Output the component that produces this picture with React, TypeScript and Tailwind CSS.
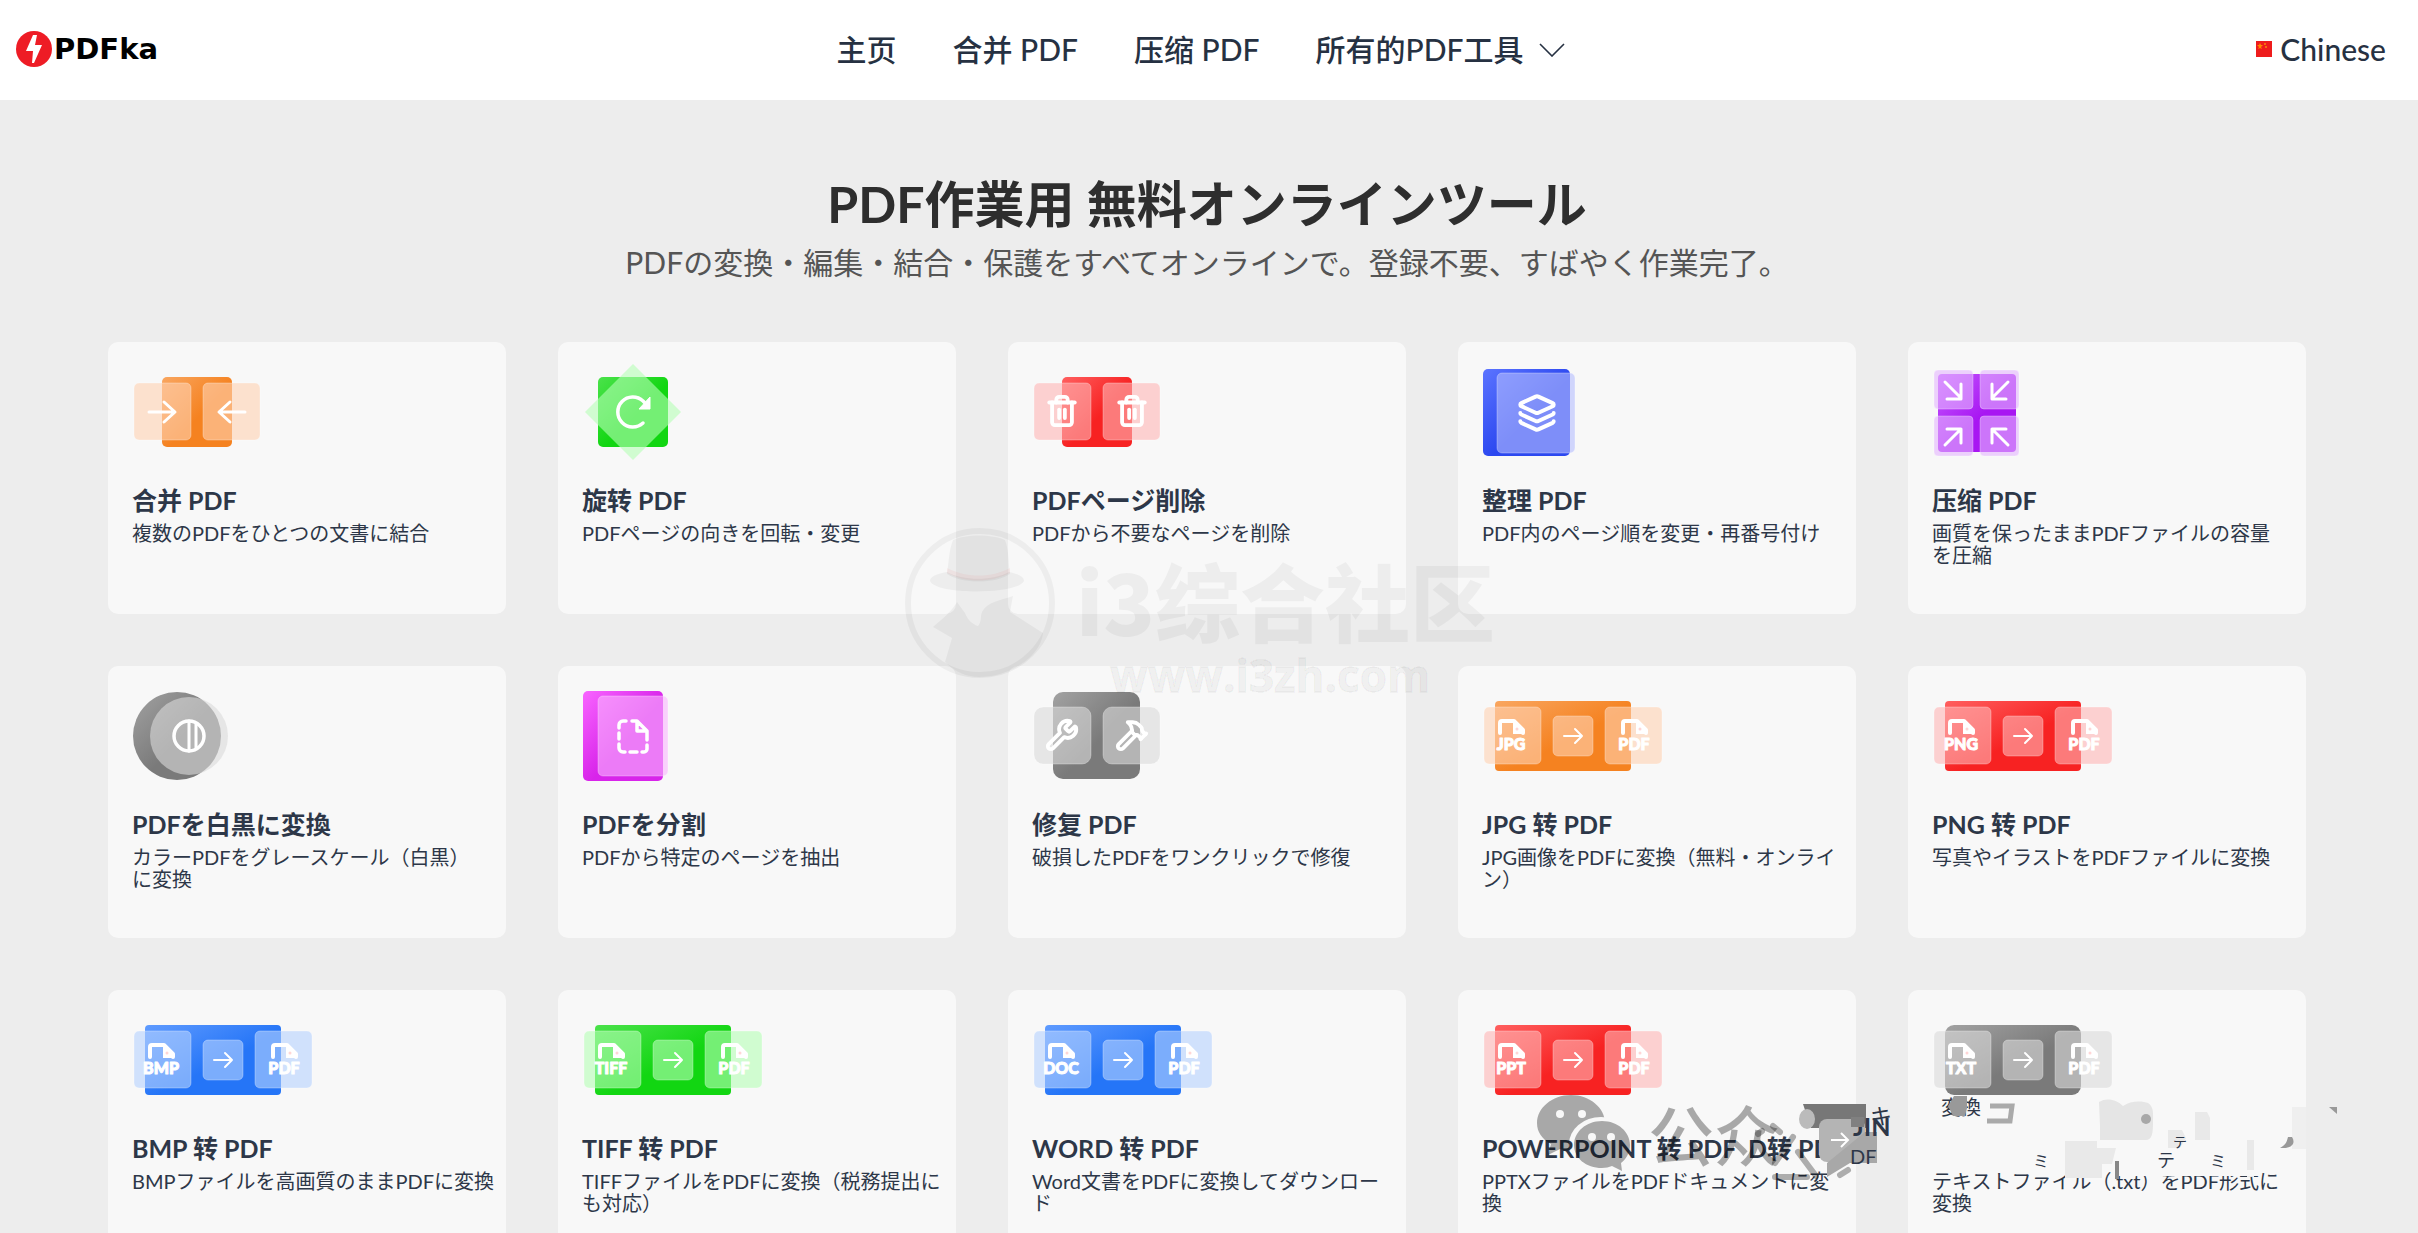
import React from 'react';
import { Hammer, Layers, Trash2, Wrench } from 'lucide-react';

type Tone = { from: string; to: string; pane: string };

const tones: Record<string, Tone> = {
  orange: { from: '#f9a660', to: '#f58220', pane: '#ffd2b2' },
  red: { from: '#ff5f5f', to: '#f72222', pane: '#ffb5b5' },
  blue: { from: '#5f9bff', to: '#2575f7', pane: '#b5d2ff' },
  green: { from: '#4be24b', to: '#12d612', pane: '#b5ffb5' },
  gray: { from: '#a2a2a2', to: '#7a7a7a', pane: '#dadada' },
  indigo: { from: '#5c74ff', to: '#2c48f0', pane: '#b5beff' },
  purple: { from: '#c65cff', to: '#a816f2', pane: '#e5b5ff' },
  magenta: { from: '#f865ff', to: '#d824ea', pane: '#fab5ff' },
};

type Tool = {
  id: string;
  tone: keyof typeof tones;
  title: string;
  text: string;
  label?: string;
};

const tools: Tool[] = [
  { id: 'merge', tone: 'orange', title: '合并 PDF', text: '複数のPDFをひとつの文書に結合' },
  { id: 'rotate', tone: 'green', title: '旋转 PDF', text: 'PDFページの向きを回転・変更' },
  { id: 'delete', tone: 'red', title: 'PDFページ削除', text: 'PDFから不要なページを削除' },
  { id: 'organize', tone: 'indigo', title: '整理 PDF', text: 'PDF内のページ順を変更・再番号付け' },
  { id: 'compress', tone: 'purple', title: '压缩 PDF', text: '画質を保ったままPDFファイルの容量\nを圧縮' },
  { id: 'grayscale', tone: 'gray', title: 'PDFを白黒に変換', text: 'カラーPDFをグレースケール（白黒）\nに変換' },
  { id: 'split', tone: 'magenta', title: 'PDFを分割', text: 'PDFから特定のページを抽出' },
  { id: 'repair', tone: 'gray', title: '修复 PDF', text: '破損したPDFをワンクリックで修復' },
  { id: 'jpg', tone: 'orange', title: 'JPG 转 PDF', text: 'JPG画像をPDFに変換（無料・オンライ\nン）', label: 'JPG' },
  { id: 'png', tone: 'red', title: 'PNG 转 PDF', text: '写真やイラストをPDFファイルに変換', label: 'PNG' },
  { id: 'bmp', tone: 'blue', title: 'BMP 转 PDF', text: 'BMPファイルを高画質のままPDFに変換', label: 'BMP' },
  { id: 'tiff', tone: 'green', title: 'TIFF 转 PDF', text: 'TIFFファイルをPDFに変換（税務提出に\nも対応）', label: 'TIFF' },
  { id: 'word', tone: 'blue', title: 'WORD 转 PDF', text: 'Word文書をPDFに変換してダウンロー\nド', label: 'DOC' },
  { id: 'ppt', tone: 'red', title: 'POWERPOINT 转 PDF  D转 PD', text: 'PPTXファイルをPDFドキュメントに変\n換', label: 'PPT' },
  { id: 'txt', tone: 'gray', title: '', text: 'テキストファイル（.txt）をPDF形式に\n変換', label: 'TXT' },
];

function Pane({ x, y, w, h, fill, r = 5 }: { x: number; y: number; w: number; h: number; fill: string; r?: number }) {
  return (
    <rect x={x} y={y} width={w} height={h} rx={r} fill={fill} fillOpacity={0.6} stroke="#fff" strokeOpacity={0.3} />
  );
}

function FileBadge({ x, label }: { x: number; label: string }) {
  return (
    <g>
      <path
        d={`M${x + 3} 47V37a2 2 0 0 1 2-2h12l9 9v3`}
        fill="none"
        stroke="#fff"
        strokeWidth="4"
        strokeLinejoin="round"
        strokeLinecap="round"
      />
      <path d={`M${x + 16} 34l11 14H${x + 16}z`} fill="#fff" />
      <circle cx={x + 20} cy={43} r={1.5} fill="#f99" fillOpacity={0.4} />
      <text
        x={x + 14}
        y={64}
        textAnchor="middle"
        fill="#fff"
        stroke="#fff"
        strokeWidth="1"
        strokeLinejoin="round"
        className="font-['Lato'] text-[16px] font-black"
      >
        {label}
      </text>
    </g>
  );
}

function ToolIcon({ tool }: { tool: Tool }) {
  const tone = tones[tool.tone];
  const grad = `url(#grad-${tool.id})`;
  const line = {
    fill: 'none',
    stroke: '#fff',
    strokeWidth: 3,
    strokeLinecap: 'round' as const,
    strokeLinejoin: 'round' as const,
  };
  const pane = tone.pane;

  return (
    <svg width="200" height="100" viewBox="0 0 200 100" aria-hidden="true">
      <defs>
        <linearGradient id={`grad-${tool.id}`} x1="0" y1="0" x2="1" y2="1">
          <stop offset="0" stopColor={tone.from} />
          <stop offset="0.55" stopColor={tone.to} />
        </linearGradient>
      </defs>

      {tool.id === 'merge' && (
        <>
          <rect x="30" y="15" width="70" height="70" rx="5" fill={grad} />
          <Pane x={2} y={21} w={57} h={57} fill={pane} />
          <Pane x={71} y={21} w={57} h={57} fill={pane} />
          <path d="M17 50h25M32 40l11 10-11 10" {...line} />
          <path d="M113 50H88M98 40L87 50l11 10" {...line} />
        </>
      )}

      {tool.id === 'rotate' && (
        <>
          <rect x="16" y="15" width="70" height="70" rx="5" fill={grad} />
          <path d="M51 2l48 48-48 48L3 50z" fill={pane} fillOpacity="0.6" />
          <path d="M61 61a15 15 0 1 1 0-22l5 5" {...line} strokeWidth={3.5} />
          <path d="M68 35v12H57z" fill="#fff" stroke="#fff" strokeLinejoin="round" />
        </>
      )}

      {tool.id === 'delete' && (
        <>
          <rect x="30" y="15" width="70" height="70" rx="5" fill={grad} />
          <Pane x={2} y={21} w={57} h={57} fill={pane} />
          <Pane x={71} y={21} w={57} h={57} fill={pane} />
          <Trash2 x={13} y={32} width={34} height={34} color="#fff" strokeWidth={2.7} />
          <Trash2 x={83} y={32} width={34} height={34} color="#fff" strokeWidth={2.7} />
        </>
      )}

      {tool.id === 'organize' && (
        <>
          <rect x="1" y="7" width="87" height="87" rx="5" fill={grad} />
          <Pane x={15} y={11} w={78} h={80} fill={pane} />
          <Layers x={35} y={31} width={40} height={40} color="#fff" strokeWidth={2.4} />
        </>
      )}

      {tool.id === 'compress' && (
        <>
          <rect x="6" y="12" width="78" height="78" rx="4" fill={grad} />
          <Pane x={2} y={8} w={39} h={39} fill={pane} r={4} />
          <Pane x={48} y={8} w={39} h={39} fill={pane} r={4} />
          <Pane x={2} y={54} w={39} h={40} fill={pane} r={4} />
          <Pane x={48} y={54} w={39} h={40} fill={pane} r={4} />
          <path d="M13 20l16 16M29 22v15H15" {...line} />
          <path d="M76 20L60 36M60 22v15h14" {...line} />
          <path d="M13 83l16-16M29 81V67H15" {...line} />
          <path d="M76 83L60 67M60 81V67h14" {...line} />
        </>
      )}

      {tool.id === 'grayscale' && (
        <>
          <circle cx="45" cy="50" r="44" fill={grad} />
          <circle cx="57" cy="50" r="39" fill={pane} fillOpacity="0.6" />
          <circle cx="57" cy="50" r="15" {...line} strokeWidth={3.5} />
          <path d="M57 35v30M64 38v24" {...line} />
        </>
      )}

      {tool.id === 'split' && (
        <>
          <rect x="1" y="5" width="80" height="90" rx="5" fill={grad} />
          <Pane x={16} y={10} w={70} h={80} fill={pane} />
          <path
            d="M44 35h-3a4 4 0 0 0-4 4v3M37 47v6M37 58v4a4 4 0 0 0 4 4h2M48 66h7M60 66h2a3 3 0 0 0 3-3v-4M65 54v-9L55 35h-5M55 36v9h9"
            {...line}
            strokeWidth={3.5}
          />
        </>
      )}

      {tool.id === 'repair' && (
        <>
          <rect x="21" y="6" width="87" height="87" rx="10" fill={grad} />
          <Pane x={2} y={21} w={57} h={57} fill={pane} r={9} />
          <Pane x={71} y={21} w={57} h={57} fill={pane} r={9} />
          <Wrench x={13} y={32} width={34} height={34} color="#fff" strokeWidth={2.7} />
          <Hammer x={83} y={32} width={34} height={34} color="#fff" strokeWidth={2.7} />
        </>
      )}

      {tool.label && (
        <>
          <rect x="13" y="15" width="136" height="70" rx={tool.tone === 'gray' ? 9 : 4} fill={grad} />
          <Pane x={2} y={21} w={57} h={57} fill={pane} />
          <Pane x={71} y={30} w={40} h={40} fill={pane} />
          <Pane x={123} y={21} w={57} h={57} fill={pane} />
          <path d="M82 50h18M93 43l7 7-7 7" {...line} strokeWidth={2} />
          <FileBadge x={15} label={tool.label} />
          <FileBadge x={138} label="PDF" />
        </>
      )}
    </svg>
  );
}

function Header() {
  return (
    <header className="flex h-25 items-center bg-white pb-0.5 pl-4 pr-8 text-[30px] leading-10 font-medium text-[#263142]">
      <div className="flex flex-1">
        <a href="#" className="flex items-center gap-0.5 text-black">
          <svg width="36" height="36" viewBox="0 0 36 36" aria-hidden="true">
            <circle cx="18" cy="18" r="18" fill="#ee1c25" />
            <path d="M17 4h4l-2 10h7l-8 18h-2l1-12h-7z" fill="#fff" />
          </svg>
          <span className="font-['DejaVu_Sans'] text-[29px] font-bold">PDFka</span>
        </a>
      </div>
      <nav className="flex items-center gap-14">
        <a href="#">主页</a>
        <a href="#">合并 PDF</a>
        <a href="#">压缩 PDF</a>
        <button type="button" className="flex items-center gap-4">
          所有的PDF工具
          <svg width="26" height="16" viewBox="0 0 26 16" fill="none" stroke="currentColor" strokeWidth="1.6" aria-hidden="true">
            <path d="M1 3l12 12L25 3" />
          </svg>
        </button>
      </nav>
      <div className="flex flex-1 justify-end">
        <button type="button" className="flex items-center gap-2">
          <svg width="16" height="16" viewBox="0 0 16 16" aria-hidden="true">
            <rect width="16" height="16" fill="#ee1c1c" />
            <path d="M4 2l1 2h2L5 6l1 2-2-1-2 1 1-2-2-2h2z" fill="#f80" />
            <circle cx="9" cy="3" r="0.7" fill="#ff0" />
            <circle cx="10" cy="6" r="0.7" fill="#ff0" />
          </svg>
          Chinese
        </button>
      </div>
    </header>
  );
}

function ToolCard({ tool }: { tool: Tool }) {
  return (
    <a href={`#${tool.id}`} className="block min-h-68 rounded-[10px] bg-[#f8f8f8] pt-5 pb-4 pl-6 text-[#2d3748]">
      <ToolIcon tool={tool} />
      <h2 className="mt-[22px] min-h-8 text-[25px] leading-8 font-bold whitespace-pre">{tool.title}</h2>
      <p className="mt-1.5 text-xl leading-[22px] whitespace-pre font-[Lato,'Noto_Sans_CJK_JP',sans-serif]">{tool.text}</p>
    </a>
  );
}

function SiteMark() {
  return (
    <svg
      className="pointer-events-none absolute top-[526px] left-[904px]"
      width="600"
      height="180"
      viewBox="0 0 600 180"
      fill="#000"
      fillOpacity="0.045"
      aria-hidden="true"
    >
      <circle cx="76" cy="77" r="72" fill="none" stroke="#000" strokeOpacity="0.045" strokeWidth="6" />
      <path d="M43 48c2-14 2-24 6-34 12-6 40-6 52 0 4 10 3 20 5 34-14 10-49 10-63 0z" />
      <path d="M43 42c20 10 44 10 63 0v5c-20 10-44 10-63 0z" fill="#f00" />
      <path d="M43 46c-12 2-17 5-17 9 5 14 88 14 94 0 0-4-5-7-15-9-16 9-46 9-62 0z" />
      <path d="M53 76c-6 10-16 18-24 25l19 11-7 24c10 10 22 15 34 15 30 0 62-20 64-44l-33-21 3-16c-12 4-26 6-31 16-2 5 0 9-4 14-6-2-10-6-13-13z" />
      <text x="172" y="110" className="font-['Noto_Sans_CJK_SC'] text-[85px] font-black">
        i3综合社区
      </text>
      <text x="206" y="166" stroke="#000" strokeOpacity="0.03" strokeWidth="2" className="font-['Open_Sans'] text-[44px] font-bold">
        www.i3zh.com
      </text>
    </svg>
  );
}

function ChannelMark() {
  return (
    <svg
      className="pointer-events-none absolute top-[1090px] left-[1530px]"
      width="830"
      height="140"
      viewBox="0 0 830 140"
      aria-hidden="true"
    >
      <defs>
        <mask id="bubble-mask">
          <rect width="120" height="100" fill="#fff" />
          <circle cx="30" cy="24" r="4" fill="#000" />
          <circle cx="52" cy="24" r="4" fill="#000" />
          <ellipse cx="71" cy="54" rx="32" ry="27" fill="#000" />
        </mask>
        <mask id="bubble-mask-small">
          <rect width="120" height="100" fill="#fff" />
          <circle cx="62" cy="47" r="4" fill="#000" />
          <circle cx="81" cy="47" r="4" fill="#000" />
        </mask>
      </defs>
      <g fill="#000" fillOpacity="0.32">
        <path d="M41 5c19 0 34 13 34 28S60 61 41 61c-4 0-8-1-11-2l-12 6 3-11C12 49 7 42 7 33 7 18 22 5 41 5z" mask="url(#bubble-mask)" />
        <path d="M72 31c16 0 28 11 28 24 0 8-4 14-9 18l1 8-10-5c-3 1-6 2-10 2-16 0-28-10-28-23s12-24 28-24z" mask="url(#bubble-mask-small)" />
        <text x="118" y="71" className="font-['Noto_Sans_CJK_SC'] text-[66px] font-medium">
          公众
        </text>
      </g>
      {/* broken up pieces to the right of the channel name */}
      <path d="M273 14h63v24h-55z" fill="#777" />
      <ellipse cx="277" cy="29" rx="8" ry="10" fill="#bbb" />
      <g fill="none" stroke="#000" strokeOpacity="0.3" strokeWidth="6" strokeLinecap="round">
        <path d="M243 36l7 6M228 44l4-3M263 47l-18 26M268 62l18 24M245 87h32M310 85l8-5" />
      </g>
      <rect x="289" y="29" width="46" height="43" rx="8" fill="#b4b4b4" />
      <path d="M335 42h12v31h-27l-23 14v-14z" fill="#a8a8a8" />
      <path d="M301 50h16M311 43l7 7-7 7" fill="none" stroke="#fff" strokeWidth="2" />
      <g fill="#2d3748">
        <text x="340" y="34" className="font-['Noto_Sans_CJK_JP'] text-[22px]">キ</text>
        <text x="323" y="46" className="font-['Lato'] text-[25px] font-bold">JIN</text>
        <text x="320" y="74" className="font-['Lato'] text-[20px]">DF</text>
        <text x="411" y="25" className="font-['Noto_Sans_CJK_JP'] text-[20px]">変換</text>
      </g>
      <path d="M321 27h13v10h-13z" fill="#808080" />
      <path d="M424 6h13v12l-2 8h-12l-5-10z" fill="#999" />
      <path d="M460 16h22l-2 15h-23" fill="none" stroke="#aaa" strokeWidth="5" />

      <path d="M569 12c8-5 18-2 24 4 8-6 20-5 25-3 6 4 5 10 5 20s-1 17-7 17h-46V36z" fill="#e5e5e5" />
      <circle cx="616" cy="29" r="5" fill="#a8a8a8" />
      <path d="M638 40h14l4 8-6 10h-12zM665 22h12l3 6v22h-15z" fill="#e9e9e9" />
      <path d="M535 51h32v7h19l-4 16h-10v14h-37zM717 50h7v37h-7z" fill="#e9e9e9" />
      <path d="M762 17h14v42h-14z" fill="#efefef" />
      <path d="M799 17h8v7z" fill="#999" />
      <path d="M762 47c4 6 0 12-12 11 6-3 7-7 8-11z" fill="#999" />
      <path d="M591 80h140v6H591z" fill="#f8f8f8" />
      <path d="M585 71h4v18h-4z" fill="#888" />
      <g fill="#2d3748" className="font-['Noto_Sans_CJK_JP'] text-[16px]">
        <text x="503" y="77">ミ</text>
        <text x="627" y="77" className="text-[18px]">テ</text>
        <text x="643" y="57" className="text-[14px]">テ</text>
        <text x="680" y="77">ミ</text>
      </g>
    </svg>
  );
}

export default function App() {
  return (
    <div className="relative min-h-screen overflow-hidden bg-[#ededed] font-[Lato,'Noto_Sans_CJK_SC',sans-serif]">
      <Header />
      <main className="pt-[74px] pr-28 pb-14 pl-27">
        <div className="text-center font-[Lato,'Noto_Sans_CJK_JP',sans-serif]">
          <h1 className="text-[50px] leading-15 font-bold text-[#2e2e2e]">PDF作業用 無料オンラインツール</h1>
          <p className="mt-2 text-[30px] leading-10 text-[#555]">
            PDFの変換・編集・結合・保護をすべてオンラインで。登録不要、すばやく作業完了。
          </p>
        </div>
        <div className="mt-15 grid grid-cols-5 gap-13">
          {tools.map((tool) => (
            <ToolCard key={tool.id} tool={tool} />
          ))}
        </div>
      </main>
      <SiteMark />
      <ChannelMark />
    </div>
  );
}
